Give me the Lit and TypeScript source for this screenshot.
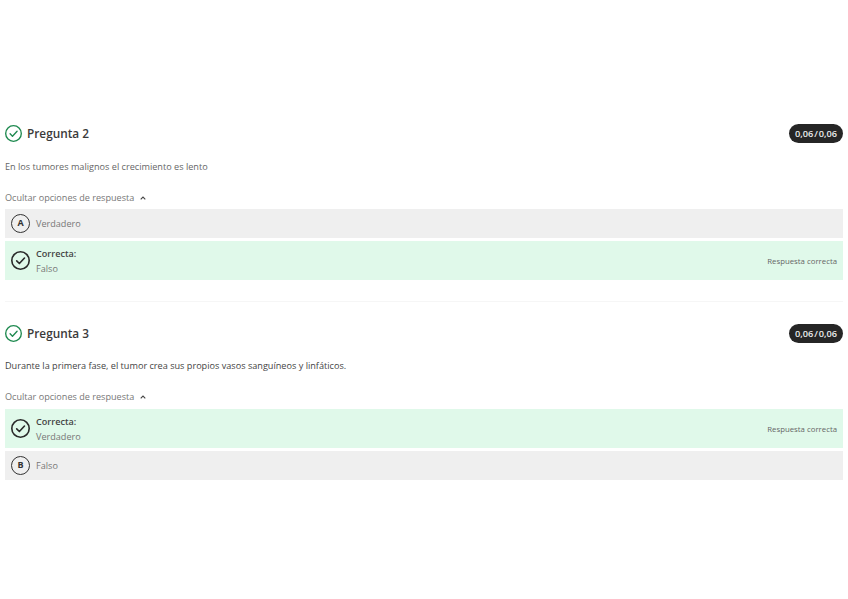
import { LitElement, html, css, svg } from 'lit';
import { customElement } from 'lit/decorators.js';

type Option = { letter?: string; text: string; correct?: boolean };
type Question = { title: string; text: string; dark?: boolean; options: Option[] };

const questions: Question[] = [
  {
    title: 'Pregunta 2',
    text: 'En los tumores malignos el crecimiento es lento',
    options: [
      { letter: 'A', text: 'Verdadero' },
      { text: 'Falso', correct: true },
    ],
  },
  {
    title: 'Pregunta 3',
    text: 'Durante la primera fase, el tumor crea sus propios vasos sanguíneos y linfáticos.',
    dark: true,
    options: [
      { text: 'Verdadero', correct: true },
      { letter: 'B', text: 'Falso' },
    ],
  },
];

const check = (size: number, color: string, width: number) => html`
  <svg width=${size} height=${size} viewBox="0 0 20 20" fill="none">
    ${svg`<circle cx="10" cy="10" r=${10 - width / 2} stroke=${color} stroke-width=${width} />
    <path d="M6 10.4l2.8 2.8L14.2 7.4" stroke=${color} stroke-width=${width} stroke-linecap="round" stroke-linejoin="round" />`}
  </svg>
`;

@customElement('app-root')
export class AppRoot extends LitElement {
  static styles = css`
    :host {
      display: block;
      min-height: 599px;
      padding: 123px 5px 0;
      box-sizing: border-box;
      background: #fff;
      font-family: 'Open Sans', sans-serif;
      color: #3d3d3d;
    }
    .question + .question {
      margin-top: 21px;
      border-top: 1px solid #f6f6f6;
      padding-top: 21px;
    }
    .header {
      display: flex;
      align-items: center;
      gap: 5px;
      height: 20px;
    }
    .header svg {
      display: block;
      flex: none;
    }
    .title {
      flex: 1;
      font-size: 11.8px;
      font-weight: 600;
      color: #3a3a3a;
    }
    .score {
      width: 54px;
      height: 19px;
      border-radius: 10px;
      background: #262626;
      color: #eee;
      font-size: 9.2px;
      font-weight: 600;
      word-spacing: -1.5px;
      line-height: 19px;
      text-align: center;
    }
    .text {
      margin-top: 15px;
      height: 17px;
      font-size: 9.14px;
      line-height: 17px;
      color: #666;
    }
    .text.dark {
      margin-top: 14px;
      color: #444;
    }
    .toggle {
      display: flex;
      align-items: center;
      gap: 6px;
      margin-top: 14px;
      height: 17px;
      font-size: 9.1px;
      line-height: 17px;
      color: #777;
    }
    .options {
      display: flex;
      flex-direction: column;
      gap: 3px;
      margin-top: 3px;
    }
    .text.dark ~ .options {
      margin-top: 4px;
    }
    .option {
      display: flex;
      align-items: center;
      gap: 6px;
      padding: 0 6px;
      height: 29px;
      background: #efefef;
      font-size: 9.1px;
      color: #777;
    }
    .option.correct {
      height: 39px;
      background: #e0f9ea;
    }
    .badge {
      flex: none;
      box-sizing: border-box;
      width: 19px;
      height: 19px;
      border: 1.3px solid #333;
      border-radius: 50%;
      font-size: 9px;
      font-weight: 700;
      line-height: 16.4px;
      text-align: center;
      color: #333;
    }
    .option svg {
      display: block;
      flex: none;
    }
    .body {
      flex: 1;
      line-height: 15px;
    }
    .label {
      font-weight: 600;
      color: #444;
    }
    .result {
      font-size: 7.8px;
      color: #666;
    }
  `;

  render() {
    return html`
      ${questions.map(
        (q) => html`
          <section class="question">
            <div class="header">
              ${check(17, '#1f8a50', 1.6)}
              <span class="title">${q.title}</span>
              <span class="score">0,06 / 0,06</span>
            </div>
            <div class="text ${q.dark ? 'dark' : ''}">${q.text}</div>
            <div class="toggle">
              Ocultar opciones de respuesta
              <svg width="6" height="4" viewBox="0 0 6 4" fill="none">
                <path d="M.7 3.3L3 1l2.3 2.3" stroke="#444" stroke-width="1.1" />
              </svg>
            </div>
            <div class="options">
              ${q.options.map((o) =>
                o.correct
                  ? html`
                      <div class="option correct">
                        ${check(19, '#2a2a2a', 1.7)}
                        <div class="body">
                          <div class="label">Correcta:</div>
                          <div>${o.text}</div>
                        </div>
                        <span class="result">Respuesta correcta</span>
                      </div>
                    `
                  : html`
                      <div class="option">
                        <span class="badge">${o.letter}</span>
                        <span>${o.text}</span>
                      </div>
                    `,
              )}
            </div>
          </section>
        `,
      )}
    `;
  }
}
